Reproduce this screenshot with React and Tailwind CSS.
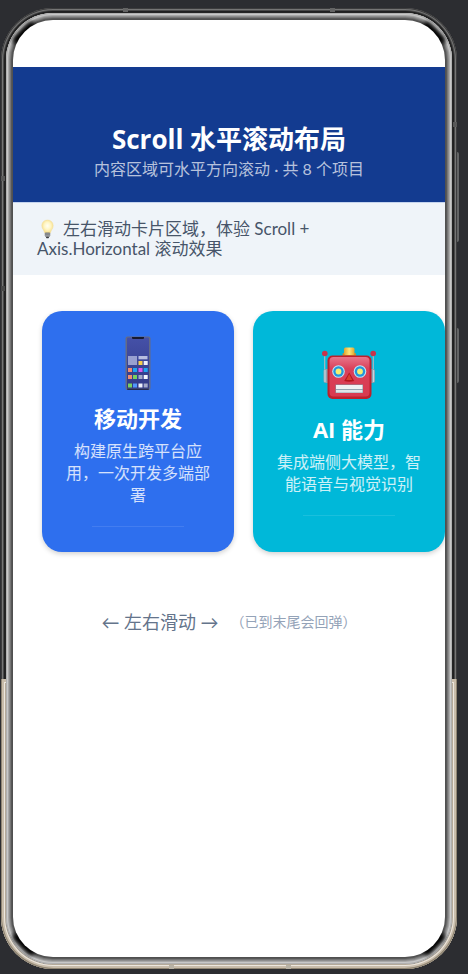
import React from "react";

const PhoneIcon = () => (
  <svg viewBox="0 0 54 54" className="size-[54px]" aria-hidden="true">
    <defs>
      <linearGradient id="phoneScreen" x1="0" y1="0" x2="0" y2="1">
        <stop offset="0" stopColor="#4551a8" />
        <stop offset="1" stopColor="#303985" />
      </linearGradient>
    </defs>
    <rect x="14.5" y="0.5" width="25" height="53.5" rx="2" fill="#646b84" />
    <path d="M16 52.5h22v0.5q0 1-1 1H17q-1 0-1-1z" fill="#242a4c" />
    <rect x="16" y="1.5" width="22" height="51" rx="1" fill="url(#phoneScreen)" />
    <path d="M21 1h12v1q0 1-1 1H22q-1 0-1-1z" fill="#171a2e" />
    <rect x="17" y="20" width="9" height="9" fill="#98a0d0" />
    <rect x="27.5" y="20" width="9" height="3.3" fill="#b8bee0" />
    <rect x="27.5" y="25" width="4" height="4" fill="#f4cc4d" />
    <rect x="32.7" y="25" width="4" height="4" fill="#eceffb" />
    <rect x="17" y="32" width="4" height="4" fill="#f08c70" />
    <rect x="22" y="32" width="4" height="4" fill="#20a4f3" />
    <rect x="27.5" y="32" width="4" height="4" fill="#d85cf0" />
    <rect x="32.7" y="32" width="4" height="4" fill="#20a4f3" />
    <rect x="17" y="39" width="4" height="4" fill="#f08c70" />
    <rect x="22" y="39" width="4" height="4" fill="#78d060" />
    <rect x="27.5" y="39" width="4" height="4" fill="#a4aac8" />
    <rect x="32.7" y="39" width="4" height="4" fill="#f4f6fd" />
    <rect x="17" y="47.5" width="4" height="4" fill="#78d060" />
    <rect x="22" y="47.5" width="4" height="4" fill="#5096fa" />
    <rect x="27.5" y="47.5" width="4" height="4" fill="#eceffb" />
    <rect x="32.7" y="47.5" width="4" height="4" fill="#a4aac8" />
  </svg>
);

const RobotIcon = () => (
  <svg viewBox="0 0 54 54" className="size-[54px]" aria-hidden="true">
    <defs>
      <linearGradient id="robotFace" x1="0" y1="0" x2="0" y2="1">
        <stop offset="0" stopColor="#e8758a" />
        <stop offset="0.3" stopColor="#d9405a" />
        <stop offset="1" stopColor="#d93a50" />
      </linearGradient>
      <linearGradient id="robotLamp" x1="0" y1="0" x2="1" y2="0">
        <stop offset="0" stopColor="#e2a52c" />
        <stop offset="0.5" stopColor="#fbe67c" />
        <stop offset="1" stopColor="#e2a52c" />
      </linearGradient>
    </defs>
    <path d="M2.7 7v18M51.3 7v18" stroke="#a9b8c4" strokeWidth="1.2" />
    <circle cx="2.8" cy="6.5" r="2.8" fill="#c8334b" />
    <circle cx="51.2" cy="6.5" r="2.8" fill="#c8334b" />
    <rect x="1.5" y="22" width="6" height="14" rx="2" fill="#8ba3b3" />
    <rect x="47" y="22" width="6" height="14" rx="2" fill="#8ba3b3" />
    <path d="M3 23v12M51.5 23v12" stroke="#c8d4dc" strokeWidth="1.2" />
    <rect x="20.5" y="6" width="13.5" height="3.5" rx="1" fill="#c98a35" />
    <rect x="22" y="0.5" width="10.5" height="7.5" rx="1.5" fill="url(#robotLamp)" />
    <rect x="5.5" y="8.5" width="44" height="43.5" rx="5" fill="#bd202c" />
    <rect x="7.5" y="10" width="40" height="39.5" rx="4" fill="url(#robotFace)" />
    <circle cx="16.5" cy="24.5" r="6.3" fill="#bfe8f7" />
    <circle cx="16.5" cy="24.5" r="5.2" fill="#2496dc" />
    <circle cx="16.5" cy="24.5" r="2.9" fill="#f4ee72" />
    <circle cx="38" cy="24.5" r="6.3" fill="#bfe8f7" />
    <circle cx="38" cy="24.5" r="5.2" fill="#2496dc" />
    <circle cx="38" cy="24.5" r="2.9" fill="#f4ee72" />
    <path d="M27.2 25.5l5 8.500q-5 1.500-10 0z" fill="#b5161f" />
    <path d="M27.2 27l3 6h-6z" fill="#d9402f" />
    <rect x="13.5" y="37.5" width="27.5" height="8.5" fill="#8095a3" />
    <rect x="14" y="38" width="26.5" height="4" fill="#eef2f4" />
    <rect x="14" y="42.8" width="26.5" height="2.8" fill="#dfe5e9" />
  </svg>
);

const BulbIcon = () => (
  <svg viewBox="0 0 20 20" className="mr-1.5 inline-block size-5 align-bottom" aria-hidden="true">
    <defs>
      <radialGradient id="bulbGlow" cx="0.5" cy="0.45" r="0.55">
        <stop offset="0" stopColor="#fffef4" />
        <stop offset="0.5" stopColor="#fff6c6" />
        <stop offset="1" stopColor="#f7dd86" />
      </radialGradient>
    </defs>
    <path
      d="M10.5 1C7 1 4.8 3.6 4.8 6.8c0 3 2.3 4.2 2.8 7.2h5.8c.5-3 2.8-4.2 2.8-7.2C16.2 3.6 14 1 10.5 1z"
      fill="url(#bulbGlow)"
      stroke="#efdca0"
      strokeWidth="0.5"
    />
    <rect x="7.8" y="13.5" width="5.4" height="4.3" rx="1" fill="#77797c" />
    <path d="M7.8 15h5.4M7.8 16.5h5.4" stroke="#b5b6b8" strokeWidth="0.5" />
    <rect x="9" y="17.8" width="3" height="1.4" rx="0.7" fill="#3b3c40" />
  </svg>
);

const cards = [
  {
    title: "移动开发",
    desc: "构建原生跨平台应用，一次开发多端部署",
    icon: PhoneIcon,
    color: "bg-[#2e6fee]",
  },
  {
    title: "AI 能力",
    desc: "集成端侧大模型，智能语音与视觉识别",
    icon: RobotIcon,
    color: "bg-[#00b8d9]",
  },
];

const FeatureCard = ({ title, desc, icon: Icon, color }) => (
  <article
    className={`flex h-[241px] w-48 shrink-0 flex-col items-center justify-center rounded-[20px] px-6 text-center shadow-[0_2px_5px_rgba(0,0,0,0.18)] ${color}`}
  >
    <Icon />
    <h2 className="mt-3.5 font-['Open_Sans','Noto_Sans_CJK_SC',sans-serif] text-[22px] leading-7 font-bold text-white">
      {title}
    </h2>
    <p className="mt-2 text-base leading-[22px] text-white/80">{desc}</p>
    <div className="mt-5 h-px w-[92px] bg-white/10" />
  </article>
);

const CornerShade = ({ className }) => (
  <div className={`absolute h-2 w-7 rounded-full bg-black blur-[2px] ${className}`} />
);

const PhoneFrame = ({ children }) => (
  <div className="relative flex flex-1 flex-col rounded-[52px] bg-[#242424] p-[5px] shadow-[inset_0_0_0_1px_#3c3c3d,inset_0_0_0_2px_#757575,inset_0_0_0_3px_#494949,inset_0_0_0_4px_#202021]">
    {/* lighter trim round the lower part of the body */}
    <div className="absolute inset-x-0 bottom-0 h-[290px] rounded-b-[52px] bg-[#b5aa99] shadow-[inset_1px_-1px_0_#8f8573,inset_-1px_-1px_0_#8f8573,inset_0_0_0_3px_#c9bdab,inset_0_0_0_4px_#ece7df]" />
    {/* antenna breaks */}
    <div className="absolute top-0 left-[122px] h-1 w-[5px] bg-[#646464]" />
    <div className="absolute top-0 right-[122px] h-1 w-[5px] bg-[#646464]" />
    <div className="absolute top-[168px] left-0 h-[5px] w-1 bg-[#585858]" />
    <div className="absolute top-[278px] left-0 h-[5px] w-1 bg-[#484848]" />
    <div className="absolute top-[114px] right-0 h-[5px] w-1 bg-[#585858]" />
    <div className="absolute bottom-0 left-[168px] h-1 w-[5px] bg-[#b8b2a5]" />
    <div className="absolute right-[166px] bottom-0 h-1 w-[5px] bg-[#b8b2a5]" />
    {/* side buttons */}
    <div className="absolute top-[144px] -right-0.5 h-[90px] w-0.5 rounded-r bg-[#646566]" />
    <div className="absolute top-[320px] -right-0.5 h-[55px] w-0.5 rounded-r bg-[#646566]" />

    <div className="relative flex flex-1 flex-col overflow-hidden rounded-[47px] bg-[#505050] p-[7px] shadow-[inset_0_0_0_1px_#b0b0b0,inset_0_0_0_2px_#c8c8c8,inset_0_0_0_3px_#a8a8a8,inset_0_0_0_4px_#8d8d8d,inset_0_0_0_5px_#757575,inset_0_0_0_6px_#585858]">
      <CornerShade className="top-4 left-1 -rotate-45" />
      <CornerShade className="top-4 right-1 rotate-45" />
      <CornerShade className="bottom-4 left-1 rotate-45" />
      <CornerShade className="right-1 bottom-4 -rotate-45" />
      <div className="relative flex flex-1 flex-col overflow-hidden rounded-[40px] bg-white">
        {children}
      </div>
    </div>
  </div>
);

const App = () => {
  return (
    <div className="flex min-h-screen flex-col bg-[#2c2d31] pt-2 pr-[11px] pb-[5px] pl-px font-[Lato,'Noto_Sans_CJK_SC',sans-serif]">
      <PhoneFrame>
        <header className="mt-[47px] border-b border-[#c5d4ee] bg-[#133b90] pt-14 pb-[22px] text-center">
          <h1 className="font-['Open_Sans','Noto_Sans_CJK_SC',sans-serif] text-[26px] leading-8 font-bold text-white">
            Scroll 水平滚动布局
          </h1>
          <p className="mt-[3px] text-base leading-[22px] text-white/70">
            内容区域可水平方向滚动 · 共 8 个项目
          </p>
        </header>

        <p className="bg-[#eff4f9] px-6 py-4 text-[17px] leading-5 text-[#475569]">
          <BulbIcon />
          左右滑动卡片区域，体验 Scroll +<br />
          Axis.Horizontal 滚动效果
        </p>

        <main>
          <div className="flex gap-[19px] overflow-x-auto py-9 pl-[29px] [scrollbar-width:none]">
            {cards.map((card) => (
              <FeatureCard key={card.title} {...card} />
            ))}
          </div>
          <div className="flex items-center justify-center gap-3 pt-5">
            <span className="text-lg leading-7 text-[#64748b]">← 左右滑动 →</span>
            <span className="text-sm leading-7 text-[#94a3b8]">（已到末尾会回弹）</span>
          </div>
        </main>
      </PhoneFrame>
    </div>
  );
};

export default App;
